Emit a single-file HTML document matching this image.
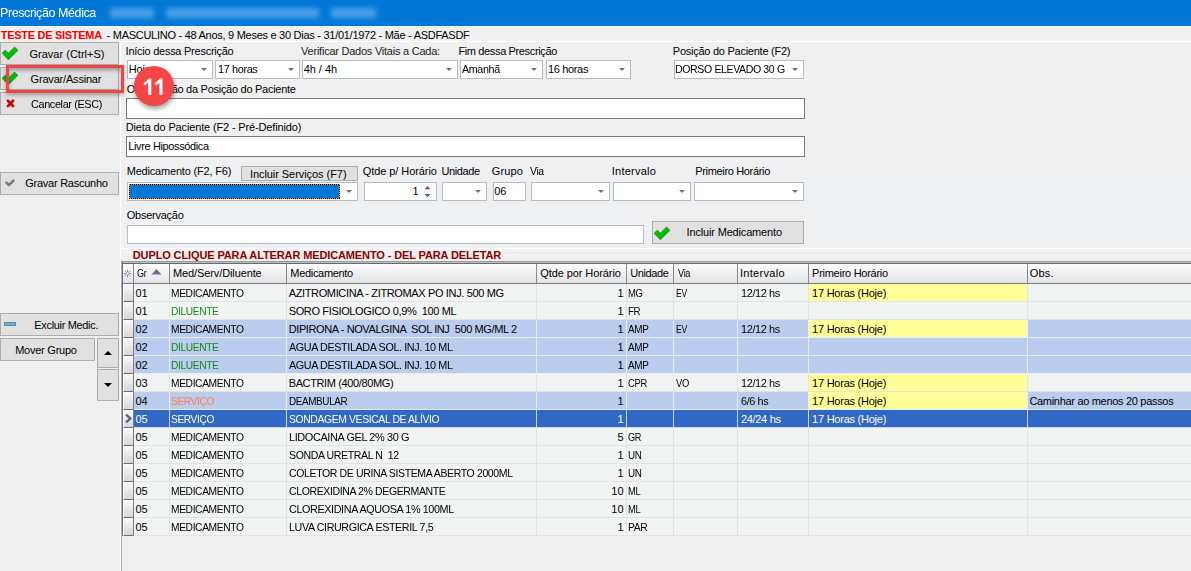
<!DOCTYPE html><html><head><meta charset="utf-8"><style>
*{margin:0;padding:0;box-sizing:border-box}
html,body{width:1191px;height:571px;overflow:hidden;background:#F0F0F0;font-family:"Liberation Sans",sans-serif;font-size:11px;color:#000}
.a{position:absolute}
.t{position:absolute;white-space:pre}
.btn{position:absolute;background:#E1E1E1;border:1px solid #ADADAD}
.cb{position:absolute;background:#fff;border:1px solid #B6BCC4}
.ed{position:absolute;background:#fff;border:1px solid #7A7A7A}
.arr{position:absolute;width:0;height:0;border-left:3px solid transparent;border-right:3px solid transparent;border-top:3px solid #707070}
</style></head><body>
<div class="a" style="left:0;top:0;width:1191px;height:26px;background:#0078D7"></div>
<div class="a" style="left:0;top:0;width:1191px;height:26px;filter:blur(2.6px)"><div style="position:absolute;left:110px;top:8px;width:44px;height:10px;background:#4A9EE4"></div><div style="position:absolute;left:166px;top:8px;width:153px;height:10px;background:#4A9EE4"></div><div style="position:absolute;left:331px;top:8px;width:45px;height:10px;background:#4A9EE4"></div></div>
<div class="a" style="left:0;top:26px;width:1191px;height:1px;background:#F8F8F8"></div>
<div class="a" style="left:120px;top:41px;width:1071px;height:1px;background:#FFFFFF"></div>
<div class="a" style="left:120px;top:41px;width:1px;height:530px;background:#FFFFFF"></div>
<div class="btn" style="left:0px;top:42px;width:119px;height:23px"></div>
<svg class="a" style="left:0px;top:42px" width="20" height="20" viewBox="0 0 20 20"><path d="M2.1 11.3 L5.3 8.2 L8.4 11.2 L14.5 5 L17.9 8.3 L8.4 17.8 Z" fill="#00C000" stroke="#127A12" stroke-width="0.7" stroke-linejoin="round"/></svg>
<div class="btn" style="left:0px;top:67px;width:119px;height:23px"></div>
<svg class="a" style="left:0px;top:67px" width="20" height="20" viewBox="0 0 20 20"><path d="M2.1 11.3 L5.3 8.2 L8.4 11.2 L14.5 5 L17.9 8.3 L8.4 17.8 Z" fill="#00C000" stroke="#127A12" stroke-width="0.7" stroke-linejoin="round"/></svg>
<div class="btn" style="left:0px;top:92px;width:119px;height:23px"></div>
<svg class="a" style="left:0px;top:92px" width="20" height="20" viewBox="0 0 20 20"><path d="M7.9 8.8 L13.1 14.1 M13.1 8.8 L7.9 14.1" stroke="#CC0000" stroke-width="2.7" stroke-linecap="round"/></svg>
<div class="btn" style="left:0px;top:172px;width:119px;height:23px"></div>
<svg class="a" style="left:0px;top:172px" width="20" height="20" viewBox="0 0 20 20"><path d="M6.4 10.6 L8.9 13.1 L13.4 8.6" fill="none" stroke="#7A7A7A" stroke-width="2.6" stroke-linecap="round" stroke-linejoin="round"/></svg>
<div class="btn" style="left:0px;top:313px;width:119px;height:23px"></div>
<div class="a" style="left:4px;top:322px;width:12px;height:4px;background:#6CB4CC;border:1px solid #5E8C9A"></div>
<div class="btn" style="left:0px;top:338px;width:95px;height:23px"></div>
<div class="btn" style="left:97px;top:338px;width:22px;height:30px"></div>
<div class="a" style="left:104px;top:351px;width:0;height:0;border-left:4px solid transparent;border-right:4px solid transparent;border-bottom:4px solid #000"></div>
<div class="btn" style="left:97px;top:369px;width:22px;height:32px"></div>
<div class="a" style="left:104px;top:383px;width:0;height:0;border-left:4px solid transparent;border-right:4px solid transparent;border-top:4px solid #000"></div>
<div class="cb" style="left:127px;top:60px;width:86px;height:19px"></div>
<div class="arr" style="left:201px;top:68px"></div>
<div class="cb" style="left:215px;top:60px;width:85px;height:19px"></div>
<div class="arr" style="left:288px;top:68px"></div>
<div class="cb" style="left:302px;top:60px;width:156px;height:19px"></div>
<div class="arr" style="left:446px;top:68px"></div>
<div class="cb" style="left:460px;top:60px;width:83px;height:19px"></div>
<div class="arr" style="left:531px;top:68px"></div>
<div class="cb" style="left:546px;top:60px;width:85px;height:19px"></div>
<div class="arr" style="left:619px;top:68px"></div>
<div class="cb" style="left:674px;top:60px;width:130px;height:19px"></div>
<div class="arr" style="left:792px;top:68px"></div>
<div class="ed" style="left:126px;top:98px;width:679px;height:21px"></div>
<div class="ed" style="left:126px;top:136px;width:679px;height:21px"></div>
<div class="a" style="left:121px;top:162px;width:1070px;height:86px;background:#EEF0F2"></div>
<div class="btn" style="left:241px;top:166px;width:117px;height:15px"></div>
<div class="cb" style="left:127px;top:182px;width:231px;height:19px"></div>
<div class="arr" style="left:346px;top:190px"></div>
<svg class="a" style="left:129px;top:184px" width="211" height="15"><rect x="0" y="0" width="211" height="15" fill="#0078D7"/><rect x="0.5" y="0.5" width="210" height="14" fill="none" stroke="#FF8728" stroke-width="1" shape-rendering="crispEdges"/><rect x="0.5" y="0.5" width="210" height="14" fill="none" stroke="#000" stroke-width="1" stroke-dasharray="1 1" shape-rendering="crispEdges"/></svg>
<div class="cb" style="left:364px;top:182px;width:73px;height:19px"></div>
<svg class="a" style="left:0;top:0" width="440" height="200"><path d="M424.6 189.2 L427.5 185.9 L430.4 189.2 Z M424.6 194 L427.5 197.3 L430.4 194 Z" fill="#5a5a5a"/></svg>
<div class="cb" style="left:442px;top:182px;width:45px;height:19px"></div>
<div class="arr" style="left:475px;top:190px"></div>
<div class="cb" style="left:493px;top:182px;width:33px;height:19px"></div>
<div class="cb" style="left:531px;top:182px;width:79px;height:19px"></div>
<div class="arr" style="left:598px;top:190px"></div>
<div class="cb" style="left:613px;top:182px;width:78px;height:19px"></div>
<div class="arr" style="left:679px;top:190px"></div>
<div class="cb" style="left:694px;top:182px;width:110px;height:19px"></div>
<div class="arr" style="left:792px;top:190px"></div>
<div class="cb" style="left:127px;top:225px;width:517px;height:19px"></div>
<div class="btn" style="left:652px;top:221px;width:152px;height:23px"></div>
<svg class="a" style="left:652px;top:222px" width="20" height="20" viewBox="0 0 20 20"><path d="M2.1 11.3 L5.3 8.2 L8.4 11.2 L14.5 5 L17.9 8.3 L8.4 17.8 Z" fill="#00C000" stroke="#127A12" stroke-width="0.7" stroke-linejoin="round"/></svg>
<div class="a" style="left:121px;top:248px;width:1070px;height:1px;background:#FFFFFF"></div>
<div class="a" style="left:121px;top:261px;width:1070px;height:1px;background:#9C9C9C"></div>
<div class="a" style="left:121px;top:262px;width:1070px;height:1px;background:#B8BCC4"></div>
<div class="a" style="left:122px;top:263px;width:1069px;height:1px;background:#6A6A6E"></div>
<div class="a" style="left:121px;top:261px;width:1px;height:310px;background:#A8B0B8"></div>
<div class="a" style="left:122px;top:262px;width:1px;height:274px;background:#6E6E6E"></div>
<div class="a" style="left:123px;top:264px;width:1068px;height:19px;background:linear-gradient(#FDFDFD,#E2E3E6)"></div>
<div class="a" style="left:123px;top:283px;width:1068px;height:1px;background:#7A7A7A"></div>
<div class="a" style="left:133px;top:264px;width:1px;height:19px;background:#8A8A8A"></div>
<div class="a" style="left:169px;top:264px;width:1px;height:19px;background:#8A8A8A"></div>
<div class="a" style="left:286px;top:264px;width:1px;height:19px;background:#8A8A8A"></div>
<div class="a" style="left:536px;top:264px;width:1px;height:19px;background:#8A8A8A"></div>
<div class="a" style="left:626px;top:264px;width:1px;height:19px;background:#8A8A8A"></div>
<div class="a" style="left:673px;top:264px;width:1px;height:19px;background:#8A8A8A"></div>
<div class="a" style="left:737px;top:264px;width:1px;height:19px;background:#8A8A8A"></div>
<div class="a" style="left:808px;top:264px;width:1px;height:19px;background:#8A8A8A"></div>
<div class="a" style="left:1027px;top:264px;width:1px;height:19px;background:#8A8A8A"></div>
<svg class="a" style="left:151px;top:268px" width="11" height="7" viewBox="0 0 11 7"><path d="M0.5 6.5 L5.5 1 L10.5 6.5 Z" fill="#6C6C8C"/></svg>
<svg class="a" style="left:123px;top:269px" width="9" height="9" viewBox="0 0 9 9"><g stroke="#7C7CA8" stroke-width="0.9"><path d="M4.5 0.8V8.2M0.8 4.5H8.2M1.9 1.9L7.1 7.1M7.1 1.9L1.9 7.1"/></g><circle cx="4.5" cy="4.5" r="1.2" fill="#F4F4F6"/></svg>
<div class="a" style="left:123px;top:284px;width:10px;height:18px;background:linear-gradient(#FAFAFC,#D6D7DB);border-bottom:1px solid #6E6E6E;border-left:1px solid #FFFFFF"></div>
<div class="a" style="left:133px;top:284px;width:1px;height:18px;background:#7E7E7E"></div>
<div class="a" style="left:134px;top:284px;width:1057px;height:18px;background:#E1E4E4"></div>
<div class="a" style="left:134px;top:284px;width:35px;height:17px;background:#F2F4F4"></div>
<div class="a" style="left:170px;top:284px;width:116px;height:17px;background:#F2F4F4"></div>
<div class="a" style="left:287px;top:284px;width:249px;height:17px;background:#F2F4F4"></div>
<div class="a" style="left:537px;top:284px;width:89px;height:17px;background:#F2F4F4"></div>
<div class="a" style="left:627px;top:284px;width:46px;height:17px;background:#F2F4F4"></div>
<div class="a" style="left:674px;top:284px;width:63px;height:17px;background:#F2F4F4"></div>
<div class="a" style="left:738px;top:284px;width:70px;height:17px;background:#F2F4F4"></div>
<div class="a" style="left:809px;top:284px;width:218px;height:17px;background:#FFFF99"></div>
<div class="a" style="left:1028px;top:284px;width:163px;height:17px;background:#F2F4F4"></div>
<div class="a" style="left:123px;top:302px;width:10px;height:18px;background:linear-gradient(#FAFAFC,#D6D7DB);border-bottom:1px solid #6E6E6E;border-left:1px solid #FFFFFF"></div>
<div class="a" style="left:133px;top:302px;width:1px;height:18px;background:#7E7E7E"></div>
<div class="a" style="left:134px;top:302px;width:1057px;height:18px;background:#E1E4E4"></div>
<div class="a" style="left:134px;top:302px;width:35px;height:17px;background:#F2F4F4"></div>
<div class="a" style="left:170px;top:302px;width:116px;height:17px;background:#F2F4F4"></div>
<div class="a" style="left:287px;top:302px;width:249px;height:17px;background:#F2F4F4"></div>
<div class="a" style="left:537px;top:302px;width:89px;height:17px;background:#F2F4F4"></div>
<div class="a" style="left:627px;top:302px;width:46px;height:17px;background:#F2F4F4"></div>
<div class="a" style="left:674px;top:302px;width:63px;height:17px;background:#F2F4F4"></div>
<div class="a" style="left:738px;top:302px;width:70px;height:17px;background:#F2F4F4"></div>
<div class="a" style="left:809px;top:302px;width:218px;height:17px;background:#F2F4F4"></div>
<div class="a" style="left:1028px;top:302px;width:163px;height:17px;background:#F2F4F4"></div>
<div class="a" style="left:123px;top:320px;width:10px;height:18px;background:linear-gradient(#FAFAFC,#D6D7DB);border-bottom:1px solid #6E6E6E;border-left:1px solid #FFFFFF"></div>
<div class="a" style="left:133px;top:320px;width:1px;height:18px;background:#7E7E7E"></div>
<div class="a" style="left:134px;top:320px;width:1057px;height:18px;background:#E6EDF8"></div>
<div class="a" style="left:134px;top:320px;width:35px;height:17px;background:#BACDEE"></div>
<div class="a" style="left:170px;top:320px;width:116px;height:17px;background:#BACDEE"></div>
<div class="a" style="left:287px;top:320px;width:249px;height:17px;background:#BACDEE"></div>
<div class="a" style="left:537px;top:320px;width:89px;height:17px;background:#BACDEE"></div>
<div class="a" style="left:627px;top:320px;width:46px;height:17px;background:#BACDEE"></div>
<div class="a" style="left:674px;top:320px;width:63px;height:17px;background:#BACDEE"></div>
<div class="a" style="left:738px;top:320px;width:70px;height:17px;background:#BACDEE"></div>
<div class="a" style="left:809px;top:320px;width:218px;height:17px;background:#FFFF99"></div>
<div class="a" style="left:1028px;top:320px;width:163px;height:17px;background:#BACDEE"></div>
<div class="a" style="left:123px;top:338px;width:10px;height:18px;background:linear-gradient(#FAFAFC,#D6D7DB);border-bottom:1px solid #6E6E6E;border-left:1px solid #FFFFFF"></div>
<div class="a" style="left:133px;top:338px;width:1px;height:18px;background:#7E7E7E"></div>
<div class="a" style="left:134px;top:338px;width:1057px;height:18px;background:#E6EDF8"></div>
<div class="a" style="left:134px;top:338px;width:35px;height:17px;background:#BACDEE"></div>
<div class="a" style="left:170px;top:338px;width:116px;height:17px;background:#BACDEE"></div>
<div class="a" style="left:287px;top:338px;width:249px;height:17px;background:#BACDEE"></div>
<div class="a" style="left:537px;top:338px;width:89px;height:17px;background:#BACDEE"></div>
<div class="a" style="left:627px;top:338px;width:46px;height:17px;background:#BACDEE"></div>
<div class="a" style="left:674px;top:338px;width:63px;height:17px;background:#BACDEE"></div>
<div class="a" style="left:738px;top:338px;width:70px;height:17px;background:#BACDEE"></div>
<div class="a" style="left:809px;top:338px;width:218px;height:17px;background:#BACDEE"></div>
<div class="a" style="left:1028px;top:338px;width:163px;height:17px;background:#BACDEE"></div>
<div class="a" style="left:123px;top:356px;width:10px;height:18px;background:linear-gradient(#FAFAFC,#D6D7DB);border-bottom:1px solid #6E6E6E;border-left:1px solid #FFFFFF"></div>
<div class="a" style="left:133px;top:356px;width:1px;height:18px;background:#7E7E7E"></div>
<div class="a" style="left:134px;top:356px;width:1057px;height:18px;background:#E6EDF8"></div>
<div class="a" style="left:134px;top:356px;width:35px;height:17px;background:#BACDEE"></div>
<div class="a" style="left:170px;top:356px;width:116px;height:17px;background:#BACDEE"></div>
<div class="a" style="left:287px;top:356px;width:249px;height:17px;background:#BACDEE"></div>
<div class="a" style="left:537px;top:356px;width:89px;height:17px;background:#BACDEE"></div>
<div class="a" style="left:627px;top:356px;width:46px;height:17px;background:#BACDEE"></div>
<div class="a" style="left:674px;top:356px;width:63px;height:17px;background:#BACDEE"></div>
<div class="a" style="left:738px;top:356px;width:70px;height:17px;background:#BACDEE"></div>
<div class="a" style="left:809px;top:356px;width:218px;height:17px;background:#BACDEE"></div>
<div class="a" style="left:1028px;top:356px;width:163px;height:17px;background:#BACDEE"></div>
<div class="a" style="left:123px;top:374px;width:10px;height:18px;background:linear-gradient(#FAFAFC,#D6D7DB);border-bottom:1px solid #6E6E6E;border-left:1px solid #FFFFFF"></div>
<div class="a" style="left:133px;top:374px;width:1px;height:18px;background:#7E7E7E"></div>
<div class="a" style="left:134px;top:374px;width:1057px;height:18px;background:#E1E4E4"></div>
<div class="a" style="left:134px;top:374px;width:35px;height:17px;background:#F2F4F4"></div>
<div class="a" style="left:170px;top:374px;width:116px;height:17px;background:#F2F4F4"></div>
<div class="a" style="left:287px;top:374px;width:249px;height:17px;background:#F2F4F4"></div>
<div class="a" style="left:537px;top:374px;width:89px;height:17px;background:#F2F4F4"></div>
<div class="a" style="left:627px;top:374px;width:46px;height:17px;background:#F2F4F4"></div>
<div class="a" style="left:674px;top:374px;width:63px;height:17px;background:#F2F4F4"></div>
<div class="a" style="left:738px;top:374px;width:70px;height:17px;background:#F2F4F4"></div>
<div class="a" style="left:809px;top:374px;width:218px;height:17px;background:#FFFF99"></div>
<div class="a" style="left:1028px;top:374px;width:163px;height:17px;background:#F2F4F4"></div>
<div class="a" style="left:123px;top:392px;width:10px;height:18px;background:linear-gradient(#FAFAFC,#D6D7DB);border-bottom:1px solid #6E6E6E;border-left:1px solid #FFFFFF"></div>
<div class="a" style="left:133px;top:392px;width:1px;height:18px;background:#7E7E7E"></div>
<div class="a" style="left:134px;top:392px;width:1057px;height:18px;background:#E6EDF8"></div>
<div class="a" style="left:134px;top:392px;width:35px;height:17px;background:#BACDEE"></div>
<div class="a" style="left:170px;top:392px;width:116px;height:17px;background:#BACDEE"></div>
<div class="a" style="left:287px;top:392px;width:249px;height:17px;background:#BACDEE"></div>
<div class="a" style="left:537px;top:392px;width:89px;height:17px;background:#BACDEE"></div>
<div class="a" style="left:627px;top:392px;width:46px;height:17px;background:#BACDEE"></div>
<div class="a" style="left:674px;top:392px;width:63px;height:17px;background:#BACDEE"></div>
<div class="a" style="left:738px;top:392px;width:70px;height:17px;background:#BACDEE"></div>
<div class="a" style="left:809px;top:392px;width:218px;height:17px;background:#FFFF99"></div>
<div class="a" style="left:1028px;top:392px;width:163px;height:17px;background:#BACDEE"></div>
<div class="a" style="left:123px;top:410px;width:10px;height:18px;background:linear-gradient(#FAFAFC,#D6D7DB);border-bottom:1px solid #6E6E6E;border-left:1px solid #FFFFFF"></div>
<div class="a" style="left:133px;top:410px;width:1px;height:18px;background:#7E7E7E"></div>
<svg class="a" style="left:120px;top:410px" width="14" height="18" viewBox="0 0 14 18"><path d="M6 4.6 L10.4 8.5 L6 12.4" fill="none" stroke="#5E5E88" stroke-width="2.3"/></svg>
<div class="a" style="left:134px;top:410px;width:1057px;height:18px;background:#C8D6EE"></div>
<div class="a" style="left:134px;top:410px;width:35px;height:17px;background:#3167C5"></div>
<div class="a" style="left:170px;top:410px;width:116px;height:17px;background:#3167C5"></div>
<div class="a" style="left:287px;top:410px;width:249px;height:17px;background:#3167C5"></div>
<div class="a" style="left:537px;top:410px;width:89px;height:17px;background:#3167C5"></div>
<div class="a" style="left:627px;top:410px;width:46px;height:17px;background:#3167C5"></div>
<div class="a" style="left:674px;top:410px;width:63px;height:17px;background:#3167C5"></div>
<div class="a" style="left:738px;top:410px;width:70px;height:17px;background:#3167C5"></div>
<div class="a" style="left:809px;top:410px;width:218px;height:17px;background:#3167C5"></div>
<div class="a" style="left:1028px;top:410px;width:163px;height:17px;background:#3167C5"></div>
<div class="a" style="left:123px;top:428px;width:10px;height:18px;background:linear-gradient(#FAFAFC,#D6D7DB);border-bottom:1px solid #6E6E6E;border-left:1px solid #FFFFFF"></div>
<div class="a" style="left:133px;top:428px;width:1px;height:18px;background:#7E7E7E"></div>
<div class="a" style="left:134px;top:428px;width:1057px;height:18px;background:#E1E4E4"></div>
<div class="a" style="left:134px;top:428px;width:35px;height:17px;background:#F2F4F4"></div>
<div class="a" style="left:170px;top:428px;width:116px;height:17px;background:#F2F4F4"></div>
<div class="a" style="left:287px;top:428px;width:249px;height:17px;background:#F2F4F4"></div>
<div class="a" style="left:537px;top:428px;width:89px;height:17px;background:#F2F4F4"></div>
<div class="a" style="left:627px;top:428px;width:46px;height:17px;background:#F2F4F4"></div>
<div class="a" style="left:674px;top:428px;width:63px;height:17px;background:#F2F4F4"></div>
<div class="a" style="left:738px;top:428px;width:70px;height:17px;background:#F2F4F4"></div>
<div class="a" style="left:809px;top:428px;width:218px;height:17px;background:#F2F4F4"></div>
<div class="a" style="left:1028px;top:428px;width:163px;height:17px;background:#F2F4F4"></div>
<div class="a" style="left:123px;top:446px;width:10px;height:18px;background:linear-gradient(#FAFAFC,#D6D7DB);border-bottom:1px solid #6E6E6E;border-left:1px solid #FFFFFF"></div>
<div class="a" style="left:133px;top:446px;width:1px;height:18px;background:#7E7E7E"></div>
<div class="a" style="left:134px;top:446px;width:1057px;height:18px;background:#E1E4E4"></div>
<div class="a" style="left:134px;top:446px;width:35px;height:17px;background:#F2F4F4"></div>
<div class="a" style="left:170px;top:446px;width:116px;height:17px;background:#F2F4F4"></div>
<div class="a" style="left:287px;top:446px;width:249px;height:17px;background:#F2F4F4"></div>
<div class="a" style="left:537px;top:446px;width:89px;height:17px;background:#F2F4F4"></div>
<div class="a" style="left:627px;top:446px;width:46px;height:17px;background:#F2F4F4"></div>
<div class="a" style="left:674px;top:446px;width:63px;height:17px;background:#F2F4F4"></div>
<div class="a" style="left:738px;top:446px;width:70px;height:17px;background:#F2F4F4"></div>
<div class="a" style="left:809px;top:446px;width:218px;height:17px;background:#F2F4F4"></div>
<div class="a" style="left:1028px;top:446px;width:163px;height:17px;background:#F2F4F4"></div>
<div class="a" style="left:123px;top:464px;width:10px;height:18px;background:linear-gradient(#FAFAFC,#D6D7DB);border-bottom:1px solid #6E6E6E;border-left:1px solid #FFFFFF"></div>
<div class="a" style="left:133px;top:464px;width:1px;height:18px;background:#7E7E7E"></div>
<div class="a" style="left:134px;top:464px;width:1057px;height:18px;background:#E1E4E4"></div>
<div class="a" style="left:134px;top:464px;width:35px;height:17px;background:#F2F4F4"></div>
<div class="a" style="left:170px;top:464px;width:116px;height:17px;background:#F2F4F4"></div>
<div class="a" style="left:287px;top:464px;width:249px;height:17px;background:#F2F4F4"></div>
<div class="a" style="left:537px;top:464px;width:89px;height:17px;background:#F2F4F4"></div>
<div class="a" style="left:627px;top:464px;width:46px;height:17px;background:#F2F4F4"></div>
<div class="a" style="left:674px;top:464px;width:63px;height:17px;background:#F2F4F4"></div>
<div class="a" style="left:738px;top:464px;width:70px;height:17px;background:#F2F4F4"></div>
<div class="a" style="left:809px;top:464px;width:218px;height:17px;background:#F2F4F4"></div>
<div class="a" style="left:1028px;top:464px;width:163px;height:17px;background:#F2F4F4"></div>
<div class="a" style="left:123px;top:482px;width:10px;height:18px;background:linear-gradient(#FAFAFC,#D6D7DB);border-bottom:1px solid #6E6E6E;border-left:1px solid #FFFFFF"></div>
<div class="a" style="left:133px;top:482px;width:1px;height:18px;background:#7E7E7E"></div>
<div class="a" style="left:134px;top:482px;width:1057px;height:18px;background:#E1E4E4"></div>
<div class="a" style="left:134px;top:482px;width:35px;height:17px;background:#F2F4F4"></div>
<div class="a" style="left:170px;top:482px;width:116px;height:17px;background:#F2F4F4"></div>
<div class="a" style="left:287px;top:482px;width:249px;height:17px;background:#F2F4F4"></div>
<div class="a" style="left:537px;top:482px;width:89px;height:17px;background:#F2F4F4"></div>
<div class="a" style="left:627px;top:482px;width:46px;height:17px;background:#F2F4F4"></div>
<div class="a" style="left:674px;top:482px;width:63px;height:17px;background:#F2F4F4"></div>
<div class="a" style="left:738px;top:482px;width:70px;height:17px;background:#F2F4F4"></div>
<div class="a" style="left:809px;top:482px;width:218px;height:17px;background:#F2F4F4"></div>
<div class="a" style="left:1028px;top:482px;width:163px;height:17px;background:#F2F4F4"></div>
<div class="a" style="left:123px;top:500px;width:10px;height:18px;background:linear-gradient(#FAFAFC,#D6D7DB);border-bottom:1px solid #6E6E6E;border-left:1px solid #FFFFFF"></div>
<div class="a" style="left:133px;top:500px;width:1px;height:18px;background:#7E7E7E"></div>
<div class="a" style="left:134px;top:500px;width:1057px;height:18px;background:#E1E4E4"></div>
<div class="a" style="left:134px;top:500px;width:35px;height:17px;background:#F2F4F4"></div>
<div class="a" style="left:170px;top:500px;width:116px;height:17px;background:#F2F4F4"></div>
<div class="a" style="left:287px;top:500px;width:249px;height:17px;background:#F2F4F4"></div>
<div class="a" style="left:537px;top:500px;width:89px;height:17px;background:#F2F4F4"></div>
<div class="a" style="left:627px;top:500px;width:46px;height:17px;background:#F2F4F4"></div>
<div class="a" style="left:674px;top:500px;width:63px;height:17px;background:#F2F4F4"></div>
<div class="a" style="left:738px;top:500px;width:70px;height:17px;background:#F2F4F4"></div>
<div class="a" style="left:809px;top:500px;width:218px;height:17px;background:#F2F4F4"></div>
<div class="a" style="left:1028px;top:500px;width:163px;height:17px;background:#F2F4F4"></div>
<div class="a" style="left:123px;top:518px;width:10px;height:18px;background:linear-gradient(#FAFAFC,#D6D7DB);border-bottom:1px solid #6E6E6E;border-left:1px solid #FFFFFF"></div>
<div class="a" style="left:133px;top:518px;width:1px;height:18px;background:#7E7E7E"></div>
<div class="a" style="left:134px;top:518px;width:1057px;height:18px;background:#E1E4E4"></div>
<div class="a" style="left:134px;top:518px;width:35px;height:17px;background:#F2F4F4"></div>
<div class="a" style="left:170px;top:518px;width:116px;height:17px;background:#F2F4F4"></div>
<div class="a" style="left:287px;top:518px;width:249px;height:17px;background:#F2F4F4"></div>
<div class="a" style="left:537px;top:518px;width:89px;height:17px;background:#F2F4F4"></div>
<div class="a" style="left:627px;top:518px;width:46px;height:17px;background:#F2F4F4"></div>
<div class="a" style="left:674px;top:518px;width:63px;height:17px;background:#F2F4F4"></div>
<div class="a" style="left:738px;top:518px;width:70px;height:17px;background:#F2F4F4"></div>
<div class="a" style="left:809px;top:518px;width:218px;height:17px;background:#F2F4F4"></div>
<div class="a" style="left:1028px;top:518px;width:163px;height:17px;background:#F2F4F4"></div>
<div class="t" style="top:5.00px;font-size:13px;line-height:16px;letter-spacing:-0.400px;color:#fff;left:-0.20px;transform:scaleX(0.9572);transform-origin:1.00px 0;">Prescrição Médica</div>
<div class="t" style="top:28.69px;font-size:11px;line-height:13px;letter-spacing:-0.293px;color:#F00000;font-weight:bold;left:0.80px;">TESTE DE SISTEMA</div>
<div class="t" style="top:28.69px;font-size:11px;line-height:13px;letter-spacing:-0.274px;color:#000;left:106.60px;">- MASCULINO - 48 Anos, 9 Meses e 30 Dias - 31/01/1972 - Mãe - ASDFASDF</div>
<div class="t" style="top:47.89px;font-size:11px;line-height:13px;letter-spacing:0.007px;color:#000;left:29.50px;">Gravar (Ctrl+S)</div>
<div class="t" style="top:72.89px;font-size:11px;line-height:13px;letter-spacing:-0.192px;color:#000;left:30.60px;">Gravar/Assinar</div>
<div class="t" style="top:97.89px;font-size:11px;line-height:13px;letter-spacing:-0.400px;color:#000;left:30.60px;transform:scaleX(0.9936);transform-origin:0.00px 0;">Cancelar (ESC)</div>
<div class="t" style="top:177.09px;font-size:11px;line-height:13px;letter-spacing:-0.256px;color:#000;left:25.30px;">Gravar Rascunho</div>
<div class="t" style="top:318.69px;font-size:11px;line-height:13px;letter-spacing:-0.331px;color:#000;left:34.30px;">Excluir Medic.</div>
<div class="t" style="top:343.69px;font-size:11px;line-height:13px;letter-spacing:-0.247px;color:#000;left:15.20px;">Mover Grupo</div>
<div class="t" style="top:44.59px;font-size:11px;line-height:13px;letter-spacing:-0.255px;color:#000;left:125.60px;">Início dessa Prescrição</div>
<div class="t" style="top:44.59px;font-size:11px;line-height:13px;letter-spacing:-0.237px;color:#1a1a1a;left:301.10px;">Verificar Dados Vitais a Cada:</div>
<div class="t" style="top:44.59px;font-size:11px;line-height:13px;letter-spacing:-0.360px;color:#000;left:458.40px;">Fim dessa Prescrição</div>
<div class="t" style="top:44.59px;font-size:11px;line-height:13px;letter-spacing:-0.254px;color:#000;left:672.80px;">Posição do Paciente (F2)</div>
<div class="t" style="top:63.19px;font-size:11px;line-height:13px;letter-spacing:-0.168px;color:#000;left:128.80px;">Hoje</div>
<div class="t" style="top:63.19px;font-size:11px;line-height:13px;letter-spacing:-0.400px;color:#000;left:217.70px;transform:scaleX(0.9949);transform-origin:0.00px 0;">17 horas</div>
<div class="t" style="top:63.19px;font-size:11px;line-height:13px;letter-spacing:-0.037px;color:#000;left:303.70px;">4h / 4h</div>
<div class="t" style="top:63.19px;font-size:11px;line-height:13px;letter-spacing:-0.400px;color:#000;left:461.50px;transform:scaleX(0.9786);transform-origin:0.00px 0;">Amanhã</div>
<div class="t" style="top:63.19px;font-size:11px;line-height:13px;letter-spacing:-0.330px;color:#000;left:547.90px;">16 horas</div>
<div class="t" style="top:63.19px;font-size:11px;line-height:13px;letter-spacing:-0.400px;color:#000;left:675.00px;transform:scaleX(0.9606);transform-origin:0.00px 0;">DORSO ELEVADO 30 G</div>
<div class="t" style="top:82.59px;font-size:11px;line-height:13px;letter-spacing:-0.276px;color:#000;left:126.80px;">Observação da Posição do Paciente</div>
<div class="t" style="top:121.49px;font-size:11px;line-height:13px;letter-spacing:-0.147px;color:#000;left:125.70px;">Dieta do Paciente (F2 - Pré-Definido)</div>
<div class="t" style="top:140.09px;font-size:11px;line-height:13px;letter-spacing:-0.375px;color:#000;left:128.30px;">Livre Hipossódica</div>
<div class="t" style="top:165.39px;font-size:11px;line-height:13px;letter-spacing:-0.186px;color:#000;left:126.70px;">Medicamento (F2, F6)</div>
<div class="t" style="top:167.89px;font-size:11px;line-height:13px;letter-spacing:-0.057px;color:#000;left:249.90px;">Incluir Serviços (F7)</div>
<div class="t" style="top:165.39px;font-size:11px;line-height:13px;letter-spacing:-0.077px;color:#000;left:362.80px;">Qtde p/ Horário</div>
<div class="t" style="top:165.39px;font-size:11px;line-height:13px;letter-spacing:-0.376px;color:#000;left:441.40px;">Unidade</div>
<div class="t" style="top:165.39px;font-size:11px;line-height:13px;letter-spacing:0.136px;color:#000;left:491.80px;">Grupo</div>
<div class="t" style="top:165.39px;font-size:11px;line-height:13px;letter-spacing:-0.400px;color:#000;left:530.30px;transform:scaleX(0.9504);transform-origin:0.00px 0;">Via</div>
<div class="t" style="top:165.39px;font-size:11px;line-height:13px;letter-spacing:0.241px;color:#000;left:611.80px;">Intervalo</div>
<div class="t" style="top:165.39px;font-size:11px;line-height:13px;letter-spacing:-0.330px;color:#000;left:695.20px;">Primeiro Horário</div>
<div class="t" style="top:185.19px;font-size:11px;line-height:13px;letter-spacing:0.000px;color:#000;left:412.60px;">1</div>
<div class="t" style="top:185.19px;font-size:11px;line-height:13px;letter-spacing:-0.118px;color:#000;left:494.30px;">06</div>
<div class="t" style="top:208.69px;font-size:11px;line-height:13px;letter-spacing:-0.243px;color:#000;left:126.70px;">Observação</div>
<div class="t" style="top:226.09px;font-size:11px;line-height:13px;letter-spacing:-0.167px;color:#000;left:686.60px;">Incluir Medicamento</div>
<div class="t" style="top:249.29px;font-size:11px;line-height:13px;letter-spacing:-0.122px;color:#8B0000;font-weight:bold;left:132.80px;">DUPLO CLIQUE PARA ALTERAR MEDICAMENTO - DEL PARA DELETAR</div>
<div class="t" style="top:266.59px;font-size:11px;line-height:13px;letter-spacing:-0.400px;color:#000;left:137.10px;transform:scaleX(0.8226);transform-origin:0.00px 0;">Gr</div>
<div class="t" style="top:266.59px;font-size:11px;line-height:13px;letter-spacing:-0.111px;color:#000;left:173.00px;">Med/Serv/Diluente</div>
<div class="t" style="top:266.59px;font-size:11px;line-height:13px;letter-spacing:-0.311px;color:#000;left:290.30px;">Medicamento</div>
<div class="t" style="top:266.59px;font-size:11px;line-height:13px;letter-spacing:-0.087px;color:#000;left:540.30px;">Qtde por Horário</div>
<div class="t" style="top:266.59px;font-size:11px;line-height:13px;letter-spacing:-0.376px;color:#000;left:630.20px;">Unidade</div>
<div class="t" style="top:266.59px;font-size:11px;line-height:13px;letter-spacing:-0.400px;color:#000;left:677.50px;transform:scaleX(0.8364);transform-origin:0.00px 0;">Via</div>
<div class="t" style="top:266.59px;font-size:11px;line-height:13px;letter-spacing:0.303px;color:#000;left:739.90px;">Intervalo</div>
<div class="t" style="top:266.59px;font-size:11px;line-height:13px;letter-spacing:-0.270px;color:#000;left:812.10px;">Primeiro Horário</div>
<div class="t" style="top:266.59px;font-size:11px;line-height:13px;letter-spacing:0.142px;color:#000;left:1029.80px;">Obs.</div>
<div class="t" style="top:287.19px;font-size:11px;line-height:13px;letter-spacing:-0.018px;color:#000;left:135.50px;">01</div>
<div class="t" style="top:287.19px;font-size:11px;line-height:13px;letter-spacing:-0.400px;color:#000;left:171.40px;transform:scaleX(0.9309);transform-origin:0.00px 0;">MEDICAMENTO</div>
<div class="t" style="top:287.19px;font-size:11px;line-height:13px;letter-spacing:-0.358px;color:#000;left:288.70px;">AZITROMICINA - ZITROMAX PO INJ. 500 MG</div>
<div class="t" style="top:287.19px;font-size:11px;line-height:13px;letter-spacing:0.000px;color:#000;left:617.40px;">1</div>
<div class="t" style="top:287.19px;font-size:11px;line-height:13px;letter-spacing:-0.400px;color:#000;left:628.40px;transform:scaleX(0.8590);transform-origin:0.00px 0;">MG</div>
<div class="t" style="top:287.19px;font-size:11px;line-height:13px;letter-spacing:-0.400px;color:#000;left:675.60px;transform:scaleX(0.7833);transform-origin:0.00px 0;">EV</div>
<div class="t" style="top:287.19px;font-size:11px;line-height:13px;letter-spacing:-0.400px;color:#000;left:740.90px;transform:scaleX(0.9950);transform-origin:0.00px 0;">12/12 hs</div>
<div class="t" style="top:287.19px;font-size:11px;line-height:13px;letter-spacing:-0.241px;color:#000;left:812.10px;">17 Horas (Hoje)</div>
<div class="t" style="top:305.19px;font-size:11px;line-height:13px;letter-spacing:-0.018px;color:#000;left:135.50px;">01</div>
<div class="t" style="top:305.19px;font-size:11px;line-height:13px;letter-spacing:-0.400px;color:#158A15;left:171.40px;transform:scaleX(0.9286);transform-origin:0.00px 0;">DILUENTE</div>
<div class="t" style="top:305.19px;font-size:11px;line-height:13px;letter-spacing:-0.353px;color:#000;left:288.70px;">SORO FISIOLOGICO 0,9%  100 ML</div>
<div class="t" style="top:305.19px;font-size:11px;line-height:13px;letter-spacing:0.000px;color:#000;left:617.40px;">1</div>
<div class="t" style="top:305.19px;font-size:11px;line-height:13px;letter-spacing:-0.400px;color:#000;left:628.40px;transform:scaleX(0.8869);transform-origin:0.00px 0;">FR</div>
<div class="t" style="top:323.19px;font-size:11px;line-height:13px;letter-spacing:-0.018px;color:#000;left:135.50px;">02</div>
<div class="t" style="top:323.19px;font-size:11px;line-height:13px;letter-spacing:-0.400px;color:#000;left:171.40px;transform:scaleX(0.9309);transform-origin:0.00px 0;">MEDICAMENTO</div>
<div class="t" style="top:323.19px;font-size:11px;line-height:13px;letter-spacing:-0.400px;color:#000;left:288.70px;">DIPIRONA - NOVALGINA  SOL INJ  500 MG/ML 2</div>
<div class="t" style="top:323.19px;font-size:11px;line-height:13px;letter-spacing:0.000px;color:#000;left:617.40px;">1</div>
<div class="t" style="top:323.19px;font-size:11px;line-height:13px;letter-spacing:-0.400px;color:#000;left:628.40px;transform:scaleX(0.9031);transform-origin:0.00px 0;">AMP</div>
<div class="t" style="top:323.19px;font-size:11px;line-height:13px;letter-spacing:-0.400px;color:#000;left:675.60px;transform:scaleX(0.7833);transform-origin:0.00px 0;">EV</div>
<div class="t" style="top:323.19px;font-size:11px;line-height:13px;letter-spacing:-0.400px;color:#000;left:740.90px;transform:scaleX(0.9950);transform-origin:0.00px 0;">12/12 hs</div>
<div class="t" style="top:323.19px;font-size:11px;line-height:13px;letter-spacing:-0.241px;color:#000;left:812.10px;">17 Horas (Hoje)</div>
<div class="t" style="top:341.19px;font-size:11px;line-height:13px;letter-spacing:-0.018px;color:#000;left:135.50px;">02</div>
<div class="t" style="top:341.19px;font-size:11px;line-height:13px;letter-spacing:-0.400px;color:#158A15;left:171.40px;transform:scaleX(0.9286);transform-origin:0.00px 0;">DILUENTE</div>
<div class="t" style="top:341.19px;font-size:11px;line-height:13px;letter-spacing:-0.400px;color:#000;left:288.70px;transform:scaleX(0.9821);transform-origin:0.00px 0;">AGUA DESTILADA SOL. INJ. 10 ML</div>
<div class="t" style="top:341.19px;font-size:11px;line-height:13px;letter-spacing:0.000px;color:#000;left:617.40px;">1</div>
<div class="t" style="top:341.19px;font-size:11px;line-height:13px;letter-spacing:-0.400px;color:#000;left:628.40px;transform:scaleX(0.9031);transform-origin:0.00px 0;">AMP</div>
<div class="t" style="top:359.19px;font-size:11px;line-height:13px;letter-spacing:-0.018px;color:#000;left:135.50px;">02</div>
<div class="t" style="top:359.19px;font-size:11px;line-height:13px;letter-spacing:-0.400px;color:#158A15;left:171.40px;transform:scaleX(0.9286);transform-origin:0.00px 0;">DILUENTE</div>
<div class="t" style="top:359.19px;font-size:11px;line-height:13px;letter-spacing:-0.400px;color:#000;left:288.70px;transform:scaleX(0.9821);transform-origin:0.00px 0;">AGUA DESTILADA SOL. INJ. 10 ML</div>
<div class="t" style="top:359.19px;font-size:11px;line-height:13px;letter-spacing:0.000px;color:#000;left:617.40px;">1</div>
<div class="t" style="top:359.19px;font-size:11px;line-height:13px;letter-spacing:-0.400px;color:#000;left:628.40px;transform:scaleX(0.9031);transform-origin:0.00px 0;">AMP</div>
<div class="t" style="top:377.19px;font-size:11px;line-height:13px;letter-spacing:-0.018px;color:#000;left:135.50px;">03</div>
<div class="t" style="top:377.19px;font-size:11px;line-height:13px;letter-spacing:-0.400px;color:#000;left:171.40px;transform:scaleX(0.9309);transform-origin:0.00px 0;">MEDICAMENTO</div>
<div class="t" style="top:377.19px;font-size:11px;line-height:13px;letter-spacing:-0.370px;color:#000;left:288.70px;">BACTRIM (400/80MG)</div>
<div class="t" style="top:377.19px;font-size:11px;line-height:13px;letter-spacing:0.000px;color:#000;left:617.40px;">1</div>
<div class="t" style="top:377.19px;font-size:11px;line-height:13px;letter-spacing:-0.400px;color:#000;left:628.40px;transform:scaleX(0.8585);transform-origin:0.00px 0;">CPR</div>
<div class="t" style="top:377.19px;font-size:11px;line-height:13px;letter-spacing:-0.400px;color:#000;left:675.60px;transform:scaleX(0.8534);transform-origin:0.00px 0;">VO</div>
<div class="t" style="top:377.19px;font-size:11px;line-height:13px;letter-spacing:-0.400px;color:#000;left:740.90px;transform:scaleX(0.9950);transform-origin:0.00px 0;">12/12 hs</div>
<div class="t" style="top:377.19px;font-size:11px;line-height:13px;letter-spacing:-0.241px;color:#000;left:812.10px;">17 Horas (Hoje)</div>
<div class="t" style="top:395.19px;font-size:11px;line-height:13px;letter-spacing:-0.018px;color:#000;left:135.50px;">04</div>
<div class="t" style="top:395.19px;font-size:11px;line-height:13px;letter-spacing:-0.400px;color:#FF7F50;left:171.40px;transform:scaleX(0.9228);transform-origin:0.00px 0;">SERVIÇO</div>
<div class="t" style="top:395.19px;font-size:11px;line-height:13px;letter-spacing:-0.400px;color:#000;left:288.70px;transform:scaleX(0.8987);transform-origin:0.00px 0;">DEAMBULAR</div>
<div class="t" style="top:395.19px;font-size:11px;line-height:13px;letter-spacing:0.000px;color:#000;left:617.40px;">1</div>
<div class="t" style="top:395.19px;font-size:11px;line-height:13px;letter-spacing:-0.400px;color:#000;left:740.90px;transform:scaleX(0.9872);transform-origin:0.00px 0;">6/6 hs</div>
<div class="t" style="top:395.19px;font-size:11px;line-height:13px;letter-spacing:-0.241px;color:#000;left:812.10px;">17 Horas (Hoje)</div>
<div class="t" style="top:395.19px;font-size:11px;line-height:13px;letter-spacing:-0.306px;color:#000;left:1029.40px;">Caminhar ao menos 20 passos</div>
<div class="t" style="top:413.19px;font-size:11px;line-height:13px;letter-spacing:-0.018px;color:#fff;left:135.50px;">05</div>
<div class="t" style="top:413.19px;font-size:11px;line-height:13px;letter-spacing:-0.400px;color:#fff;left:171.40px;transform:scaleX(0.9228);transform-origin:0.00px 0;">SERVIÇO</div>
<div class="t" style="top:413.19px;font-size:11px;line-height:13px;letter-spacing:-0.400px;color:#fff;left:288.70px;transform:scaleX(0.9441);transform-origin:0.00px 0;">SONDAGEM VESICAL DE ALÍVIO</div>
<div class="t" style="top:413.19px;font-size:11px;line-height:13px;letter-spacing:0.000px;color:#fff;left:617.40px;">1</div>
<div class="t" style="top:413.19px;font-size:11px;line-height:13px;letter-spacing:-0.300px;color:#fff;left:740.90px;">24/24 hs</div>
<div class="t" style="top:413.19px;font-size:11px;line-height:13px;letter-spacing:-0.241px;color:#fff;left:812.10px;">17 Horas (Hoje)</div>
<div class="t" style="top:431.19px;font-size:11px;line-height:13px;letter-spacing:-0.018px;color:#000;left:135.50px;">05</div>
<div class="t" style="top:431.19px;font-size:11px;line-height:13px;letter-spacing:-0.400px;color:#000;left:171.40px;transform:scaleX(0.9309);transform-origin:0.00px 0;">MEDICAMENTO</div>
<div class="t" style="top:431.19px;font-size:11px;line-height:13px;letter-spacing:-0.400px;color:#000;left:288.70px;transform:scaleX(0.9946);transform-origin:0.00px 0;">LIDOCAINA GEL 2% 30 G</div>
<div class="t" style="top:431.19px;font-size:11px;line-height:13px;letter-spacing:0.000px;color:#000;left:617.40px;">5</div>
<div class="t" style="top:431.19px;font-size:11px;line-height:13px;letter-spacing:-0.400px;color:#000;left:628.40px;transform:scaleX(0.8356);transform-origin:0.00px 0;">GR</div>
<div class="t" style="top:449.19px;font-size:11px;line-height:13px;letter-spacing:-0.018px;color:#000;left:135.50px;">05</div>
<div class="t" style="top:449.19px;font-size:11px;line-height:13px;letter-spacing:-0.400px;color:#000;left:171.40px;transform:scaleX(0.9309);transform-origin:0.00px 0;">MEDICAMENTO</div>
<div class="t" style="top:449.19px;font-size:11px;line-height:13px;letter-spacing:-0.400px;color:#000;left:288.70px;transform:scaleX(0.9598);transform-origin:0.00px 0;">SONDA URETRAL N  12</div>
<div class="t" style="top:449.19px;font-size:11px;line-height:13px;letter-spacing:0.000px;color:#000;left:617.40px;">1</div>
<div class="t" style="top:449.19px;font-size:11px;line-height:13px;letter-spacing:-0.400px;color:#000;left:628.40px;transform:scaleX(0.8942);transform-origin:0.00px 0;">UN</div>
<div class="t" style="top:467.19px;font-size:11px;line-height:13px;letter-spacing:-0.018px;color:#000;left:135.50px;">05</div>
<div class="t" style="top:467.19px;font-size:11px;line-height:13px;letter-spacing:-0.400px;color:#000;left:171.40px;transform:scaleX(0.9309);transform-origin:0.00px 0;">MEDICAMENTO</div>
<div class="t" style="top:467.19px;font-size:11px;line-height:13px;letter-spacing:-0.400px;color:#000;left:288.70px;transform:scaleX(0.9575);transform-origin:0.00px 0;">COLETOR DE URINA SISTEMA ABERTO 2000ML</div>
<div class="t" style="top:467.19px;font-size:11px;line-height:13px;letter-spacing:0.000px;color:#000;left:617.40px;">1</div>
<div class="t" style="top:467.19px;font-size:11px;line-height:13px;letter-spacing:-0.400px;color:#000;left:628.40px;transform:scaleX(0.8942);transform-origin:0.00px 0;">UN</div>
<div class="t" style="top:485.19px;font-size:11px;line-height:13px;letter-spacing:-0.018px;color:#000;left:135.50px;">05</div>
<div class="t" style="top:485.19px;font-size:11px;line-height:13px;letter-spacing:-0.400px;color:#000;left:171.40px;transform:scaleX(0.9309);transform-origin:0.00px 0;">MEDICAMENTO</div>
<div class="t" style="top:485.19px;font-size:11px;line-height:13px;letter-spacing:-0.400px;color:#000;left:288.70px;transform:scaleX(0.9564);transform-origin:0.00px 0;">CLOREXIDINA 2% DEGERMANTE</div>
<div class="t" style="top:485.19px;font-size:11px;line-height:13px;letter-spacing:0.000px;color:#000;left:611.28px;">10</div>
<div class="t" style="top:485.19px;font-size:11px;line-height:13px;letter-spacing:-0.400px;color:#000;left:628.40px;transform:scaleX(0.8535);transform-origin:0.00px 0;">ML</div>
<div class="t" style="top:503.19px;font-size:11px;line-height:13px;letter-spacing:-0.018px;color:#000;left:135.50px;">05</div>
<div class="t" style="top:503.19px;font-size:11px;line-height:13px;letter-spacing:-0.400px;color:#000;left:171.40px;transform:scaleX(0.9309);transform-origin:0.00px 0;">MEDICAMENTO</div>
<div class="t" style="top:503.19px;font-size:11px;line-height:13px;letter-spacing:-0.400px;color:#000;left:288.70px;transform:scaleX(0.9828);transform-origin:0.00px 0;">CLOREXIDINA AQUOSA 1% 100ML</div>
<div class="t" style="top:503.19px;font-size:11px;line-height:13px;letter-spacing:0.000px;color:#000;left:611.28px;">10</div>
<div class="t" style="top:503.19px;font-size:11px;line-height:13px;letter-spacing:-0.400px;color:#000;left:628.40px;transform:scaleX(0.8535);transform-origin:0.00px 0;">ML</div>
<div class="t" style="top:521.19px;font-size:11px;line-height:13px;letter-spacing:-0.018px;color:#000;left:135.50px;">05</div>
<div class="t" style="top:521.19px;font-size:11px;line-height:13px;letter-spacing:-0.400px;color:#000;left:171.40px;transform:scaleX(0.9309);transform-origin:0.00px 0;">MEDICAMENTO</div>
<div class="t" style="top:521.19px;font-size:11px;line-height:13px;letter-spacing:-0.400px;color:#000;left:288.70px;transform:scaleX(0.9757);transform-origin:0.00px 0;">LUVA CIRURGICA ESTERIL 7,5</div>
<div class="t" style="top:521.19px;font-size:11px;line-height:13px;letter-spacing:0.000px;color:#000;left:617.40px;">1</div>
<div class="t" style="top:521.19px;font-size:11px;line-height:13px;letter-spacing:-0.400px;color:#000;left:628.40px;transform:scaleX(0.9403);transform-origin:0.00px 0;">PAR</div>
<div class="a" style="left:6px;top:65px;width:118px;height:28px;border:3px solid #F24444;box-shadow:inset 0 2px 4px rgba(0,0,0,0.35), 0 2px 4px rgba(0,0,0,.3)"></div>
<div class="a" style="left:134px;top:66px;width:40px;height:40px;border-radius:50%;background:#F44646;box-shadow:1px 3px 4px rgba(0,0,0,0.35)"></div>
<svg class="a" style="left:0;top:0" width="200" height="120"><g stroke="#fff" fill="none"><path d="M149.75 78.6 V94.8" stroke-width="3.1"/><path d="M150 79.6 L144.2 84.4" stroke-width="2.6"/><path d="M160.95 78.6 V94.8" stroke-width="3.1"/><path d="M161.2 79.6 L155.4 84.4" stroke-width="2.6"/></g></svg>
</body></html>
